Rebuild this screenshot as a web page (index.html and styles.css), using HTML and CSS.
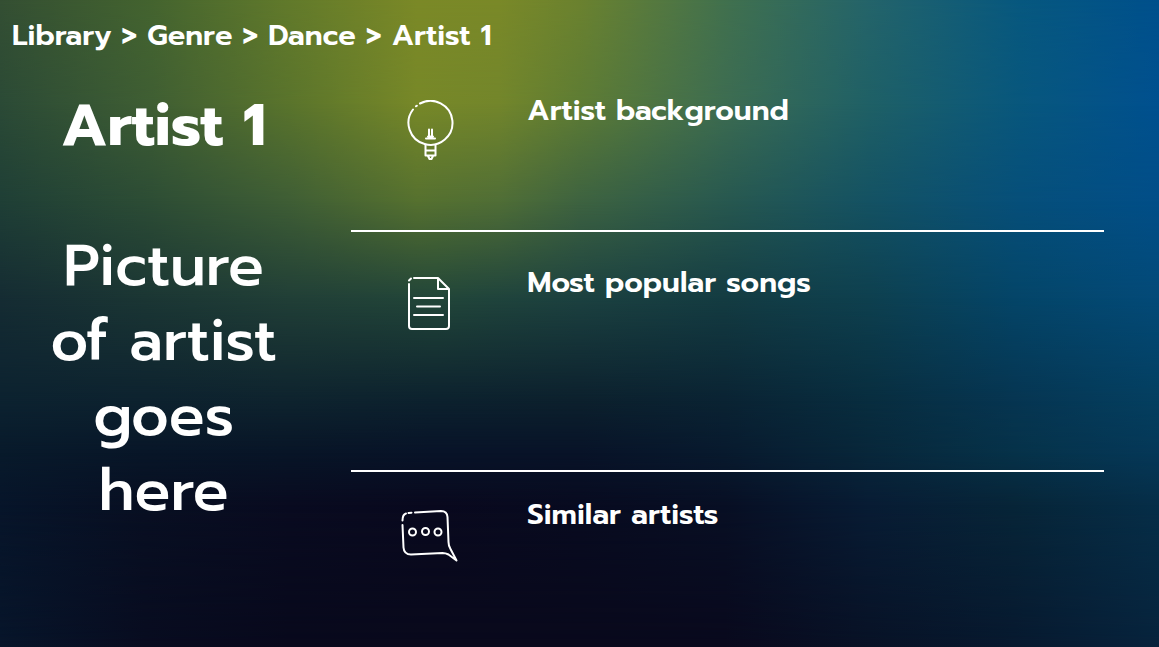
FILE: index.html
```
<!DOCTYPE html>
<html lang="en">
<head>
<meta charset="utf-8">
<meta name="viewport" content="width=device-width, initial-scale=1">
<title>Artist 1</title>
<link rel="stylesheet" href="styles.css">
</head>
<body>
<div class="backdrop" aria-hidden="true">
  <div class="band band-1"></div>
  <div class="band band-2"></div>
  <div class="band band-3"></div>
  <div class="band band-4"></div>
  <div class="band band-5"></div>
  <div class="band band-6"></div>
  <div class="band band-7"></div>
  <div class="band band-8"></div>
</div>
<nav class="breadcrumb" aria-label="Breadcrumb"><a href="#library">Library</a> &gt; <a href="#genre">Genre</a> &gt; <a href="#dance">Dance</a> &gt; <a href="#artist" aria-current="page">Artist 1</a></nav>
<main class="layout">
  <div class="profile">
    <h1 class="name">Artist 1</h1>
    <p class="portrait">Picture<br>of artist<br>goes<br>here</p>
  </div>
  <div class="sections">
    <section class="section background">
      <svg class="icon" viewBox="-1 3 64 64" aria-hidden="true">
        <path d="M20 6.500A22 22 0 1 1 13 12.500M16 9.300l.8-.6" />
        <path d="M25.500 48v10.500h10V48M25.500 53.500h10M28 59l1.500 3h2l1.500-3M26 41.500h9M29 39.500v-7M32 39.500v-7M28 39.500h5" />
      </svg>
      <h2 class="title">Artist background</h2>
    </section>
    <section class="section songs">
      <svg class="icon" viewBox="0 0 64 64" aria-hidden="true">
        <path d="M15 6h24l11 11v37a3 3 0 0 1-3 3H13a3 3 0 0 1-3-3V12M10 8.500l2-2M39 6v11h11" />
        <path d="M15 26h29M18 34.500h23M15 43h29" />
      </svg>
      <h2 class="title">Most popular songs</h2>
    </section>
    <section class="section similar">
      <svg class="icon" viewBox="1 -1 64 64" aria-hidden="true">
        <path d="M17 7.500l26-1.500q6 0 6.500 6l1 25q0 4 2 7l6 11.500-8-6q-3-1.500-6-1.500L13 49.500q-7 0-7.500-7L4.500 20M4.500 15.500q0-6 3.500-7M10.500 8l3-.3" />
        <circle cx="14.500" cy="27" r="3.500" />
        <circle cx="27.500" cy="26.500" r="3.500" />
        <circle cx="40" cy="27" r="3.500" />
      </svg>
      <h2 class="title">Similar artists</h2>
    </section>
  </div>
</main>
</body>
</html>
```
FILE: styles.css
```
* {
  box-sizing: border-box;
}

body {
  margin: 0;
  min-height: 100vh;
  background: #09091c;
  color: #fff;
  font-family: Prompt, "Noto Sans", "Open Sans", sans-serif;
  font-weight: 500;
}

/* Each band is a row of colours that fades in below the previous one. */
.backdrop,
.band {
  position: absolute;
  inset: 0;
}

.backdrop {
  z-index: -1;
}

.band-1 {
  background: linear-gradient(90deg, #344f33, #44642f 13%, #627a2b 25%, #7b8927 36%, #7a8928 43%, #6b822f 50%, #40704f 63%, #24646a 75%, #07587f 88%, #00508c);
}

.band-2 {
  background: linear-gradient(90deg, #2b4a36, #3f5e33 13%, #5a742c 25%, #778828 36%, #73862b 43%, #5e7c34 50%, #3c6c52 63%, #1f6066 75%, #08577d 88%, #00508f);
  mask-image: linear-gradient(transparent, #000 16%);
}

.band-3 {
  background: linear-gradient(90deg, #1f3f36, #2d4d35 13%, #3f5e35 25%, #56712f 36%, #506e36 43%, #3e6340 50%, #275850 63%, #145263 75%, #064f7a 88%, #014e88);
  mask-image: linear-gradient(transparent 16%, #000 31%);
}

.band-4 {
  background: linear-gradient(90deg, #152c33, #1b3634, #213f37, #224639, #1c4140, #143c42, #0e404f, #044568, #034a78);
  mask-image: linear-gradient(transparent 31%, #000 46%);
}

.band-5 {
  background: linear-gradient(90deg, #0c2230, #0d222f, #0e232e, #0c212e, #0c202d, #0a2333, #082d3f, #063551, #043f60);
  mask-image: linear-gradient(transparent 46%, #000 62%);
}

.band-6 {
  background: linear-gradient(90deg, #081a2b, #081628, #081527, #081328, #081328, #081a2e, #08273a, #063249, #053858);
  mask-image: linear-gradient(transparent 62%, #000 70%);
}

.band-7 {
  background: linear-gradient(90deg, #07152a, #080f22, #090b20, #09091e, #080b20, #080f24, #081c34, #072538, #062e48);
  mask-image: linear-gradient(transparent 70%, #000 78%);
}

.band-8 {
  background: linear-gradient(90deg, #07152a, #080c20, #08091c, #09091c, #09091c, #09091d, #081226, #07192f, #07233c);
  mask-image: linear-gradient(transparent 78%, #000);
}

.breadcrumb {
  padding: 15px 12px 0;
  font-size: 29px;
  font-weight: 600;
  line-height: 40px;
}

.breadcrumb a {
  color: inherit;
  text-decoration: none;
}

.layout {
  display: grid;
  grid-template-columns: 10fr 23fr;
  gap: 24px;
  padding: 1px 55px 0 0;
}

.profile {
  padding-top: 32px;
  text-align: center;
}

.name {
  margin: 0;
  font-size: 59px;
  font-weight: 700;
  line-height: 76px;
}

.portrait {
  margin: 64px 0 0;
  font-size: 59px;
  line-height: 75px;
}

.section {
  display: grid;
  grid-template-columns: 48px 64px 1fr;
  align-items: start;
}

.section + .section {
  border-top: 2px solid #fff;
}

.background {
  min-height: 174px;
  padding-top: 34px;
}

.songs {
  min-height: 240px;
  padding-top: 30px;
}

.similar {
  padding-top: 22px;
}

.icon {
  grid-column: 2;
  width: 64px;
  height: 64px;
  margin-top: 10px;
  fill: none;
  stroke: #fff;
  stroke-width: 2;
  stroke-linecap: round;
  stroke-linejoin: round;
}

.title {
  margin: 0 0 0 64px;
  font-size: 29px;
  font-weight: 600;
  line-height: 40px;
}
```
